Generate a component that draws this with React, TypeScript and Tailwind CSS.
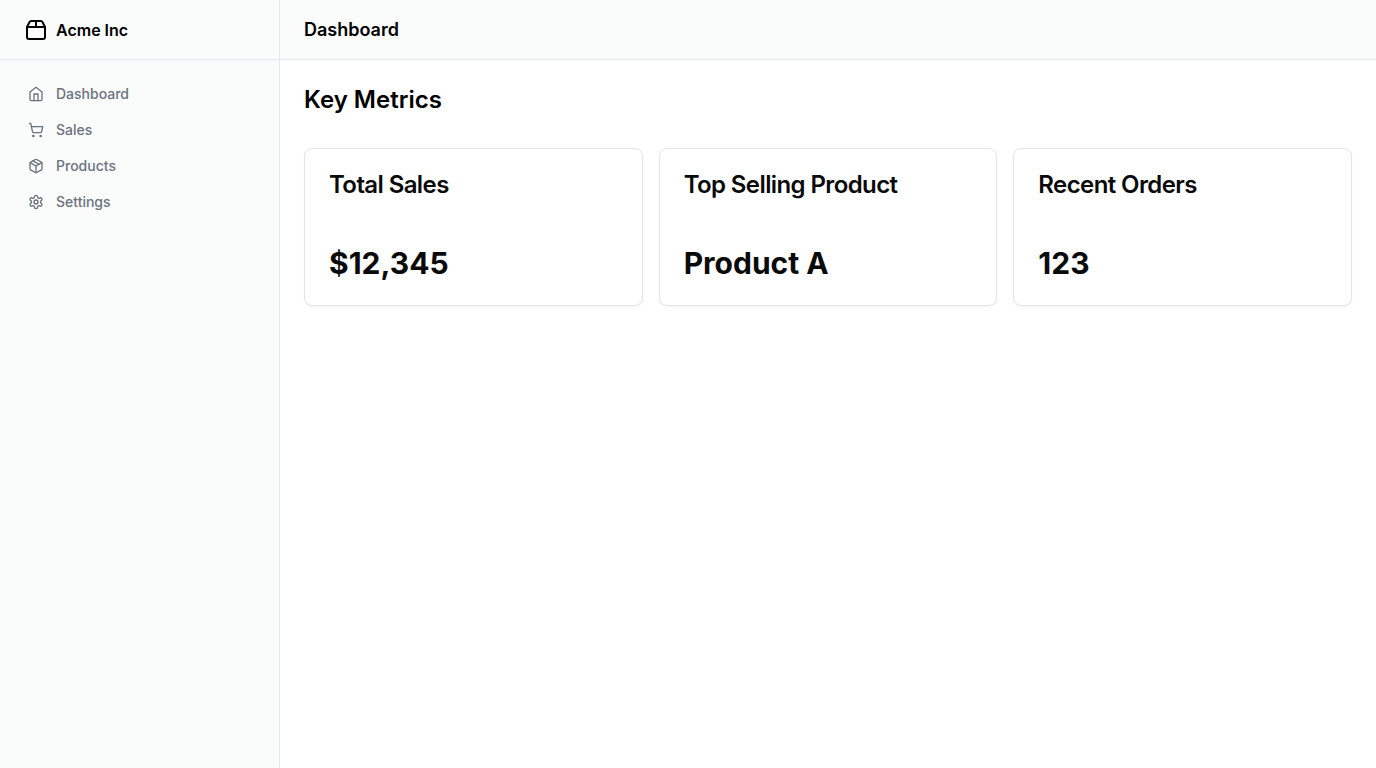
import React from "react";

const iconProps = {
  viewBox: "0 0 24 24",
  fill: "none",
  stroke: "currentColor",
  strokeWidth: 2,
  strokeLinecap: "round",
  strokeLinejoin: "round",
  "aria-hidden": true,
} as const;

const PackageIcon = () => (
  <svg {...iconProps} className="h-6 w-6">
    <path d="M3 9h18v10a2 2 0 0 1-2 2H5a2 2 0 0 1-2-2V9Z" />
    <path d="m3 9 2.45-4.9A2 2 0 0 1 7.24 3h9.52a2 2 0 0 1 1.8 1.1L21 9" />
    <path d="M12 3v6" />
  </svg>
);

const HomeIcon = () => (
  <svg {...iconProps} className="h-4 w-4">
    <path d="m3 9 9-7 9 7v11a2 2 0 0 1-2 2H5a2 2 0 0 1-2-2z" />
    <path d="M9 22V12h6v10" />
  </svg>
);

const CartIcon = () => (
  <svg {...iconProps} className="h-4 w-4">
    <circle cx="8" cy="21" r="1" />
    <circle cx="19" cy="21" r="1" />
    <path d="M2.05 2.05h2l2.66 12.42a2 2 0 0 0 2 1.58h9.78a2 2 0 0 0 1.95-1.57l1.65-7.43H5.12" />
  </svg>
);

const BoxIcon = () => (
  <svg {...iconProps} className="h-4 w-4">
    <path d="m7.5 4.27 9 5.15" />
    <path d="M21 8a2 2 0 0 0-1-1.73l-7-4a2 2 0 0 0-2 0l-7 4A2 2 0 0 0 3 8v8a2 2 0 0 0 1 1.73l7 4a2 2 0 0 0 2 0l7-4A2 2 0 0 0 21 16Z" />
    <path d="m3.3 7 8.7 5 8.7-5" />
    <path d="M12 22V12" />
  </svg>
);

const SettingsIcon = () => (
  <svg {...iconProps} className="h-4 w-4">
    <path d="M12.22 2h-.44a2 2 0 0 0-2 2v.18a2 2 0 0 1-1 1.73l-.43.25a2 2 0 0 1-2 0l-.15-.08a2 2 0 0 0-2.73.73l-.22.38a2 2 0 0 0 .73 2.73l.15.1a2 2 0 0 1 1 1.72v.51a2 2 0 0 1-1 1.74l-.15.09a2 2 0 0 0-.73 2.73l.22.38a2 2 0 0 0 2.73.73l.15-.08a2 2 0 0 1 2 0l.43.25a2 2 0 0 1 1 1.73V20a2 2 0 0 0 2 2h.44a2 2 0 0 0 2-2v-.18a2 2 0 0 1 1-1.73l.43-.25a2 2 0 0 1 2 0l.15.08a2 2 0 0 0 2.73-.73l.22-.39a2 2 0 0 0-.73-2.73l-.15-.08a2 2 0 0 1-1-1.74v-.5a2 2 0 0 1 1-1.74l.15-.09a2 2 0 0 0 .73-2.73l-.22-.38a2 2 0 0 0-2.73-.73l-.15.08a2 2 0 0 1-2 0l-.43-.25a2 2 0 0 1-1-1.73V4a2 2 0 0 0-2-2z" />
    <circle cx="12" cy="12" r="3" />
  </svg>
);

const links = [
  { label: "Dashboard", Icon: HomeIcon },
  { label: "Sales", Icon: CartIcon },
  { label: "Products", Icon: BoxIcon },
  { label: "Settings", Icon: SettingsIcon },
];

const metrics = [
  { title: "Total Sales", value: "$12,345" },
  { title: "Top Selling Product", value: "Product A" },
  { title: "Recent Orders", value: "123" },
];

export default function App() {
  return (
    <div className="grid min-h-screen grid-cols-[280px_1fr] bg-white font-['Inter',sans-serif] text-black">
      <aside className="border-r border-[#e5e7eb] bg-[#fafcfb]">
        <div className="flex h-[60px] items-center border-b border-[#e5e7eb] px-6">
          <a href="#" className="flex items-center gap-2 font-semibold">
            <PackageIcon />
            <span>Acme Inc</span>
          </a>
        </div>
        <nav className="grid px-4 py-4 text-sm font-medium">
          {links.map(({ label, Icon }) => (
            <a key={label} href="#" className="flex items-center gap-3 rounded-lg px-3 py-2 text-[#6b7280]">
              <Icon />
              {label}
            </a>
          ))}
        </nav>
      </aside>
      <div className="flex flex-col">
        <header className="flex h-[60px] items-center border-b border-[#e5e7eb] bg-[#fafcfb] px-6">
          <h1 className="text-lg font-semibold">Dashboard</h1>
        </header>
        <main className="flex flex-col gap-8 p-6">
          <h2 className="text-2xl font-semibold">Key Metrics</h2>
          <div className="grid grid-cols-3 gap-4">
            {metrics.map(({ title, value }) => (
              <section key={title} className="rounded-lg border border-[#e5e5e5] bg-white text-[#0a0a0a] shadow-xs">
                <div className="p-6">
                  <h3 className="text-2xl leading-6 font-semibold tracking-tight">{title}</h3>
                </div>
                <div className="p-6">
                  <p className="text-3xl font-bold">{value}</p>
                </div>
              </section>
            ))}
          </div>
        </main>
      </div>
    </div>
  );
}
